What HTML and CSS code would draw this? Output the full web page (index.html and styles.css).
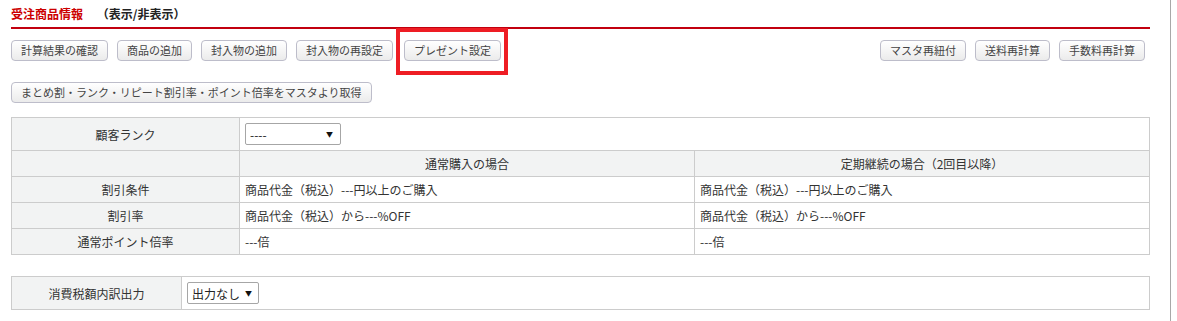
FILE: index.html
```html
<!DOCTYPE html>
<html lang="ja">
<head>
    <meta charset="UTF-8">
    <meta name="viewport" content="width=device-width, initial-scale=1.0">
    <title>受注商品情報</title>
    <link rel="stylesheet" href="styles.css">
</head>
<body>
    <div class="page">
        <div class="section-head">
            <span class="section-title">受注商品情報</span>
            <span class="section-toggle">（表示/非表示）</span>
        </div>

        <div class="btn-row">
            <div class="btn-group">
                <button class="btn">計算結果の確認</button>
                <button class="btn">商品の追加</button>
                <button class="btn">封入物の追加</button>
                <button class="btn">封入物の再設定</button>
                <button class="btn btn-marked">プレゼント設定</button>
            </div>
            <div class="btn-group btn-group-right">
                <button class="btn">マスタ再紐付</button>
                <button class="btn">送料再計算</button>
                <button class="btn">手数料再計算</button>
            </div>
        </div>

        <div class="btn-row btn-row-second">
            <button class="btn">まとめ割・ランク・リピート割引率・ポイント倍率をマスタより取得</button>
        </div>

        <table class="info-table rank-table">
            <colgroup>
                <col class="col-label">
                <col class="col-half">
                <col class="col-half">
            </colgroup>
            <tr class="row-tall">
                <th>顧客ランク</th>
                <td colspan="2">
                    <span class="select-wrap select-rank">
                        <select>
                            <option>----</option>
                        </select>
                    </span>
                </td>
            </tr>
            <tr>
                <th></th>
                <th>通常購入の場合</th>
                <th>定期継続の場合（2回目以降）</th>
            </tr>
            <tr>
                <th>割引条件</th>
                <td>商品代金（税込）---円以上のご購入</td>
                <td>商品代金（税込）---円以上のご購入</td>
            </tr>
            <tr>
                <th>割引率</th>
                <td>商品代金（税込）から---%OFF</td>
                <td>商品代金（税込）から---%OFF</td>
            </tr>
            <tr>
                <th>通常ポイント倍率</th>
                <td>---倍</td>
                <td>---倍</td>
            </tr>
        </table>

        <table class="info-table tax-table">
            <colgroup>
                <col class="col-tax">
                <col>
            </colgroup>
            <tr class="row-tall">
                <th>消費税額内訳出力</th>
                <td>
                    <span class="select-wrap select-tax">
                        <select>
                            <option>出力なし</option>
                        </select>
                    </span>
                </td>
            </tr>
        </table>
    </div>
</body>
</html>
```

FILE: styles.css
```css
html, body {
    margin: 0;
    padding: 0;
    background: #fff;
}

body {
    font-family: "Noto Sans CJK JP", "Noto Sans", sans-serif;
    font-size: 12px;
    color: #333;
}

.page {
    width: 1139px;
    min-height: 321px;
    padding: 0 20px 0 11px;
    border-right: 1px solid #a8a8a8;
}

/* 見出し */
.section-head {
    padding-top: 6px;
    padding-bottom: 5px;
    line-height: 16px;
    border-bottom: 2px solid #c2000f;
    font-weight: bold;
}

.section-title {
    color: #cc0000;
}

.section-toggle {
    margin-left: 11px;
    color: #222;
}

/* ボタン */
.btn-row {
    display: flex;
    justify-content: space-between;
    margin-top: 11px;
}

.btn-row-second {
    margin-top: 21px;
}

.btn-group {
    display: flex;
    gap: 9px;
}

.btn-group-right {
    margin-right: 5px;
}

.btn {
    position: relative;
    height: 21px;
    padding: 0 9px;
    border: 1px solid #bdbdca;
    border-radius: 4px;
    background: linear-gradient(#ffffff, #ebebeb);
    font-family: inherit;
    font-size: 11px;
    line-height: 19px;
    color: #444;
    cursor: pointer;
}

.btn-marked {
    margin-left: 2px;
}

.btn-marked::after {
    content: "";
    position: absolute;
    left: -9px;
    top: -13px;
    width: 104px;
    height: 39px;
    border: 4px solid #ee1d24;
    pointer-events: none;
}

/* テーブル */
.info-table {
    width: 1139px;
    border-collapse: collapse;
    table-layout: fixed;
}

.rank-table {
    margin-top: 14px;
}

.tax-table {
    margin-top: 21px;
}

.col-label {
    width: 228px;
}

.col-tax {
    width: 170px;
}

.info-table th,
.info-table td {
    border: 1px solid #cccccc;
    height: 19px;
    padding: 3px 5px;
    line-height: 19px;
    font-size: 12px;
    white-space: nowrap;
}

.info-table th {
    background: #f2f3f3;
    font-weight: normal;
    text-align: center;
    color: #333;
}

.info-table td {
    text-align: left;
    color: #333;
}

.info-table .row-tall th,
.info-table .row-tall td {
    height: 22px;
    padding-top: 5px;
    padding-bottom: 5px;
}

/* セレクト */
.select-wrap {
    position: relative;
    display: block;
    width: max-content;
}

.select-wrap select {
    display: block;
    appearance: none;
    -webkit-appearance: none;
    height: 22px;
    border: 1px solid #a6a6a6;
    border-radius: 2px;
    background: #fff;
    padding: 0 4px;
    font-family: inherit;
    font-size: 12px;
    color: #222;
}

.select-wrap::after {
    content: "▼";
    position: absolute;
    top: 5px;
    font-size: 7px;
    line-height: 12px;
    color: #111;
    pointer-events: none;
}

.select-rank select {
    width: 96px;
}

.select-rank::after {
    right: 8px;
}

.select-tax select {
    width: 72px;
}

.select-tax::after {
    right: 7px;
}
```
